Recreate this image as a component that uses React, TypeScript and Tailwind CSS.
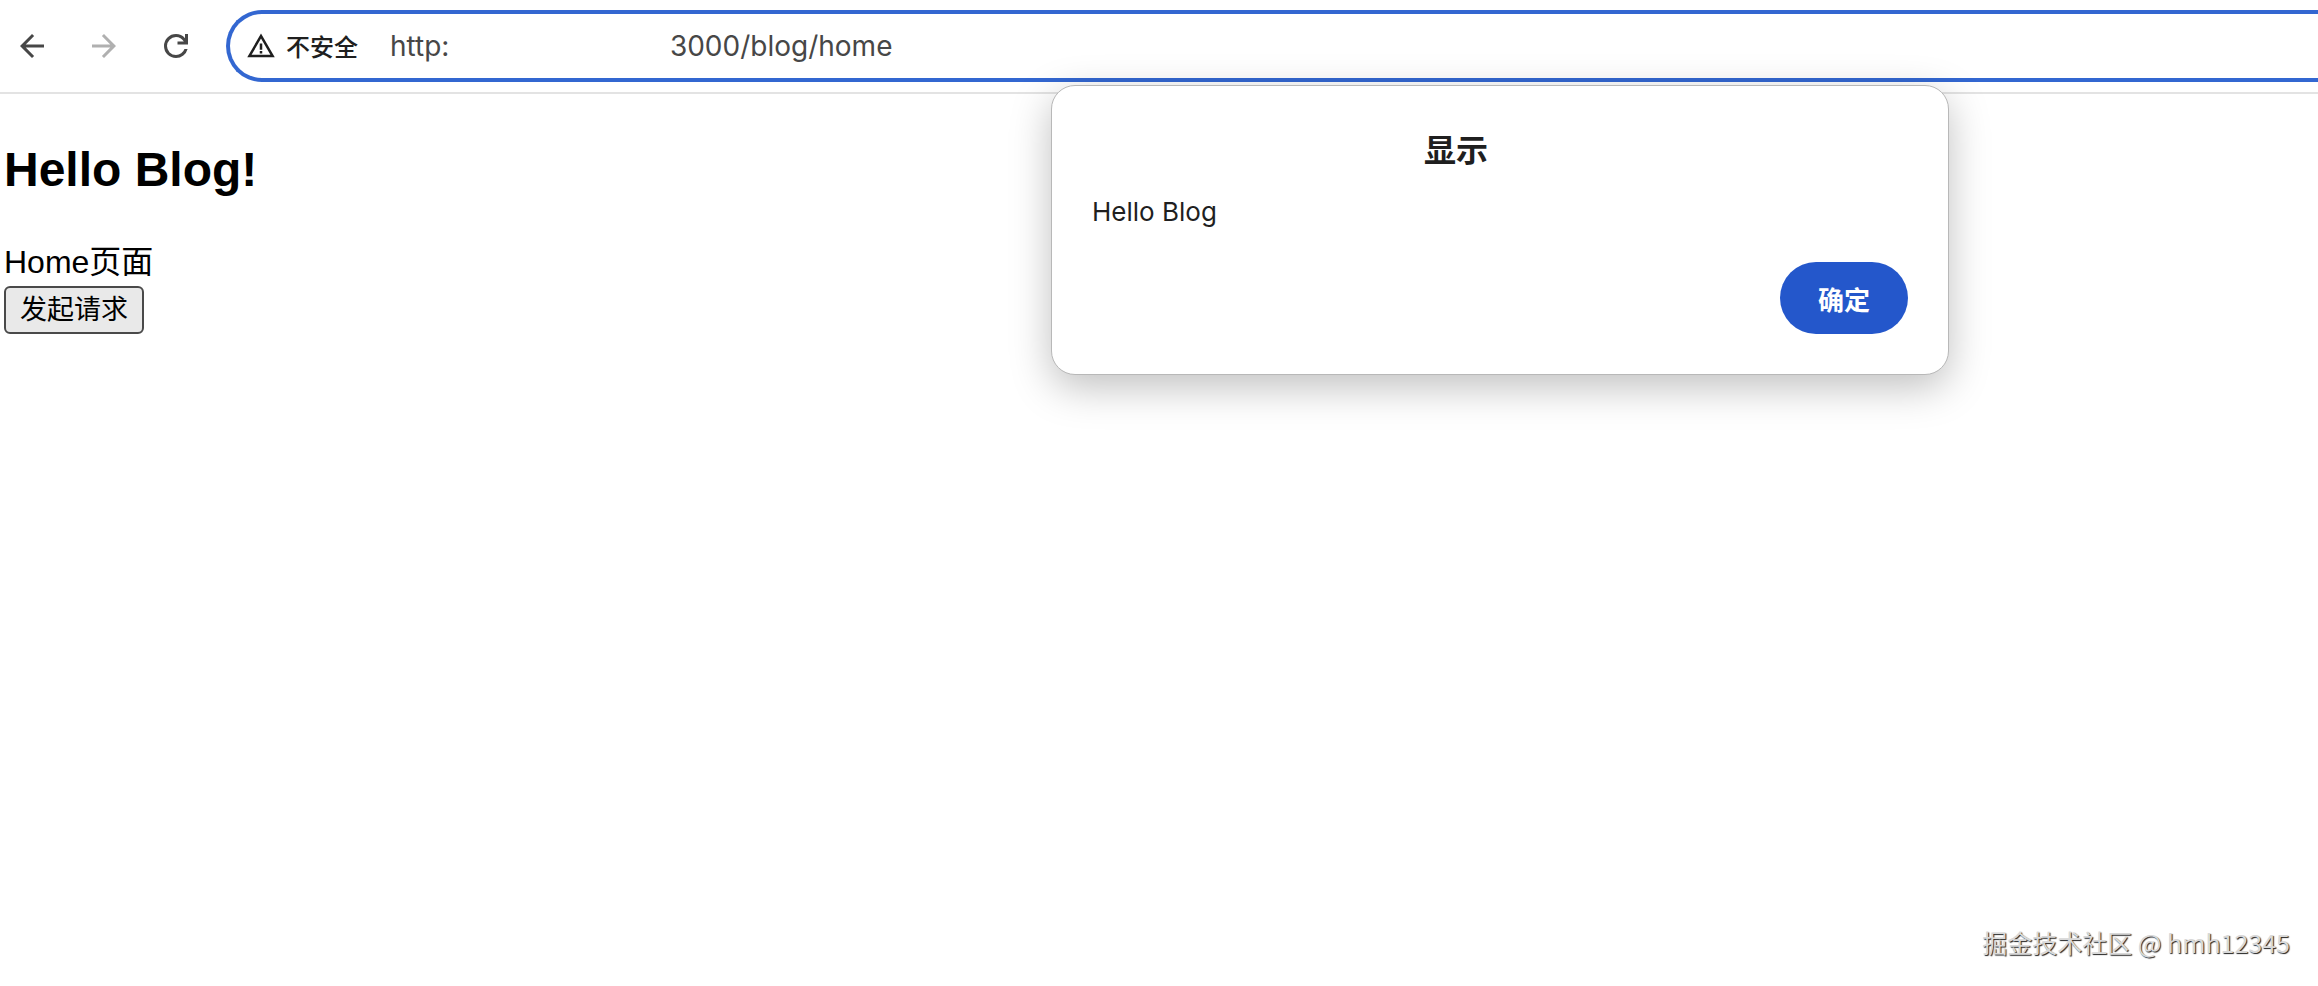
import { useState } from 'react';
import { MdArrowBack, MdArrowForward, MdWarningAmber } from 'react-icons/md';

const initialUrl = 'http:' + '\u00a0'.repeat(28) + '3000/blog/home';

function ReloadIcon() {
  return (
    <svg viewBox="0 0 24 24" fill="currentColor" className="size-9" aria-hidden="true">
      <path d="M12 20q-3.35 0-5.675-2.325T4 12t2.325-5.675T12 4q1.725 0 3.3.713T18 6.75V4h2v7h-7V9h4.2q-.8-1.4-2.187-2.2T12 6Q9.5 6 7.75 7.75T6 12t1.75 4.25T12 18q1.925 0 3.475-1.1T17.65 14h2.1q-.7 2.65-2.85 4.325T12 20" />
    </svg>
  );
}

function Toolbar() {
  const [url, setUrl] = useState(initialUrl);

  return (
    <header className="flex items-center h-[94px] border-b-2 border-[#e3e3e3] pl-3.5">
      <div className="flex items-center gap-9 mr-8 text-[#474747]">
        <button aria-label="返回">
          <MdArrowBack className="size-9" />
        </button>
        <button aria-label="前进" className="text-[#b0b0b0]">
          <MdArrowForward className="size-9" />
        </button>
        <button aria-label="重新加载">
          <ReloadIcon />
        </button>
      </div>

      {/* Address bar */}
      <div className="flex flex-1 items-center h-[72px] rounded-l-full border-4 border-r-0 border-[#3367d1] pl-4 text-[#1f1f1f]">
        <button className="flex items-center gap-2.5 text-[24px] leading-8 font-medium font-['Noto_Sans_CJK_SC',sans-serif]">
          <MdWarningAmber className="size-[30px]" />
          不安全
        </button>
        <input
          type="text"
          aria-label="地址"
          value={url}
          onChange={(e) => setUrl(e.target.value)}
          className="flex-1 ml-8 text-[28px] leading-9 text-[#474747] outline-none font-[Inter,sans-serif]"
        />
      </div>
    </header>
  );
}

function AlertDialog() {
  return (
    <div
      role="alertdialog"
      aria-labelledby="alert-title"
      aria-describedby="alert-message"
      className="absolute top-[85px] left-[1051px] w-[898px] rounded-3xl border border-[#b8b8b8] bg-white px-10 py-10 text-[#1f1f1f] shadow-[0_12px_40px_rgba(0,0,0,0.25)]"
    >
      <h1
        id="alert-title"
        className="pr-[88px] text-center text-[32px] leading-11 font-bold font-['Noto_Sans_CJK_SC',sans-serif]"
      >
        显示
      </h1>
      <p id="alert-message" className="mt-6 text-[26px] leading-9 font-[Inter,sans-serif]">
        Hello Blog
      </p>
      <div className="flex justify-end mt-8">
        <button className="h-[72px] w-32 rounded-full bg-[#2457cb] text-[26px] font-bold text-white font-['Noto_Sans_CJK_SC',sans-serif]">
          确定
        </button>
      </div>
    </div>
  );
}

export default function App() {
  return (
    <div className="relative flex flex-col min-h-screen bg-white text-black font-['Liberation_Sans','Noto_Sans_CJK_SC',sans-serif]">
      <Toolbar />

      <main className="flex-1 px-1 pt-12">
        <h2 className="text-[48px] leading-14 font-bold">Hello Blog!</h2>
        <div className="mt-10 text-[32px] leading-12">Home页面</div>
        <button className="block h-12 rounded-md border-2 border-[#4a4a4a] bg-[#e9e9e9] px-3.5 text-[27px] leading-10">
          发起请求
        </button>
      </main>

      <AlertDialog />

      <footer className="flex justify-end px-7 pb-6 text-[25px] leading-10 text-[#d9d9d9] [text-shadow:1px_1px_1px_#222] font-['Noto_Sans_CJK_SC',sans-serif]">
        掘金技术社区 @ hmh12345
      </footer>
    </div>
  );
}
